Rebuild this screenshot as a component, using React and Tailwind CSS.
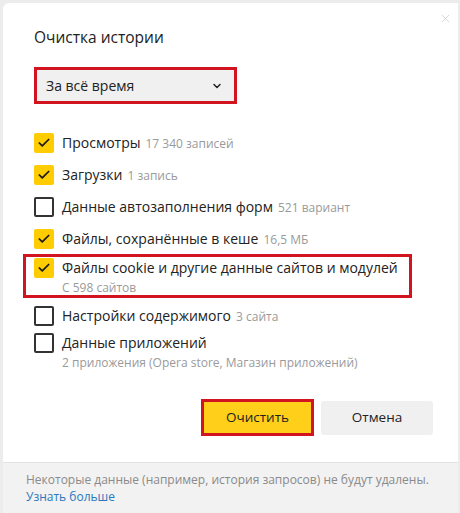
import { Check, ChevronDown, X } from 'lucide-react'

const font = { fontFamily: '"Open Sans", "Noto Sans", sans-serif' }

function Box({ checked }) {
    return checked ? (
        <div className="w-5 h-5 rounded-[2px] bg-[#ffcc00] flex items-center justify-center flex-shrink-0">
            <Check size={14} strokeWidth={3} color="#1a1a1a" />
        </div>
    ) : (
        <div className="w-5 h-5 rounded-[2px] border-2 border-[#333] bg-white flex-shrink-0" />
    )
}

function Row({ checked, label, note, sub, className = '' }) {
    return (
        <div className={`flex gap-[8px] ${className}`}>
            <Box checked={checked} />
            <div className="flex flex-col">
                <div className="h-5 flex items-baseline gap-[5px] whitespace-nowrap">
                    <span className="text-[14px] leading-5 text-[#222]">{label}</span>
                    {note && <span className="text-[12px] leading-5 text-[#9a9a9a]">{note}</span>}
                </div>
                {sub && <div className="h-5 leading-5 text-[12px] text-[#9a9a9a] whitespace-nowrap">{sub}</div>}
            </div>
        </div>
    )
}

export default function App() {
    return (
        <div className="w-[460px] h-[513px] bg-[#ececec] pl-[3px] pt-[3px] overflow-hidden" style={font}>
            <div className="w-[455px] h-[510px] bg-white rounded-tl-[6px] flex flex-col relative">
                <X size={13} strokeWidth={1.5} className="absolute right-[6px] top-[9px] text-[#cfcfcf]" />

                <div className="pl-[31px] flex flex-col flex-1">
                    <h1 className="mt-[23px] h-[22px] text-[15.5px] leading-[22px] text-[#222] font-medium">Очистка истории</h1>

                    {/* period select */}
                    <div className="mt-[19px] w-[203px] h-[37px] border-[3px] border-[#d1141f] bg-[#f0f0f0] flex items-center justify-between pl-[9px] pr-[11px]">
                        <span className="text-[14px] text-[#222]">За всё время</span>
                        <ChevronDown size={12} strokeWidth={3} color="#222" />
                    </div>

                    <div className="flex flex-col mt-[29px]">
                        <Row checked label="Просмотры" note="17 340 записей" />
                        <Row checked label="Загрузки" note="1 запись" className="mt-[12px]" />
                        <Row label="Данные автозаполнения форм" note="521 вариант" className="mt-[12px]" />
                        <Row checked label="Файлы, сохранённые в кеше" note="16,5 МБ" className="mt-[12px]" />
                        <div className="mt-[5px] ml-[-11px] w-[389px] h-[44px] border-[3px] border-[#d1141f] pl-[8px] pt-[1px]">
                            <Row checked label="Файлы cookie и другие данные сайтов и модулей" sub="С 598 сайтов" />
                        </div>
                        <Row label="Настройки содержимого" note="3 сайта" className="mt-[8px]" />
                        <Row label="Данные приложений" sub="2 приложения (Opera store, Магазин приложений)" className="mt-[7px]" />
                    </div>

                    <div className="flex justify-end gap-[7px] mt-[26px] pr-[25px] items-center">
                        <button className="w-[113px] h-[37px] border-[3px] border-[#d1141f] bg-[#ffcf1a] text-[13.5px] text-[#222]">
                            Очистить
                        </button>
                        <button className="w-[112px] h-[34px] rounded-[3px] bg-[#f0f0f0] text-[13.5px] text-[#222]">
                            Отмена
                        </button>
                    </div>
                </div>

                <div className="h-[51px] bg-[#f2f2f2] border-t border-[#e3e3e3] pl-[23px] pt-[8px] text-[12px] leading-[17px] whitespace-nowrap">
                    <div className="text-[#8a8a8a]">Некоторые данные (например, история запросов) не будут удалены.</div>
                    <div className="text-[#2a78bd]">Узнать больше</div>
                </div>
            </div>
        </div>
    )
}
